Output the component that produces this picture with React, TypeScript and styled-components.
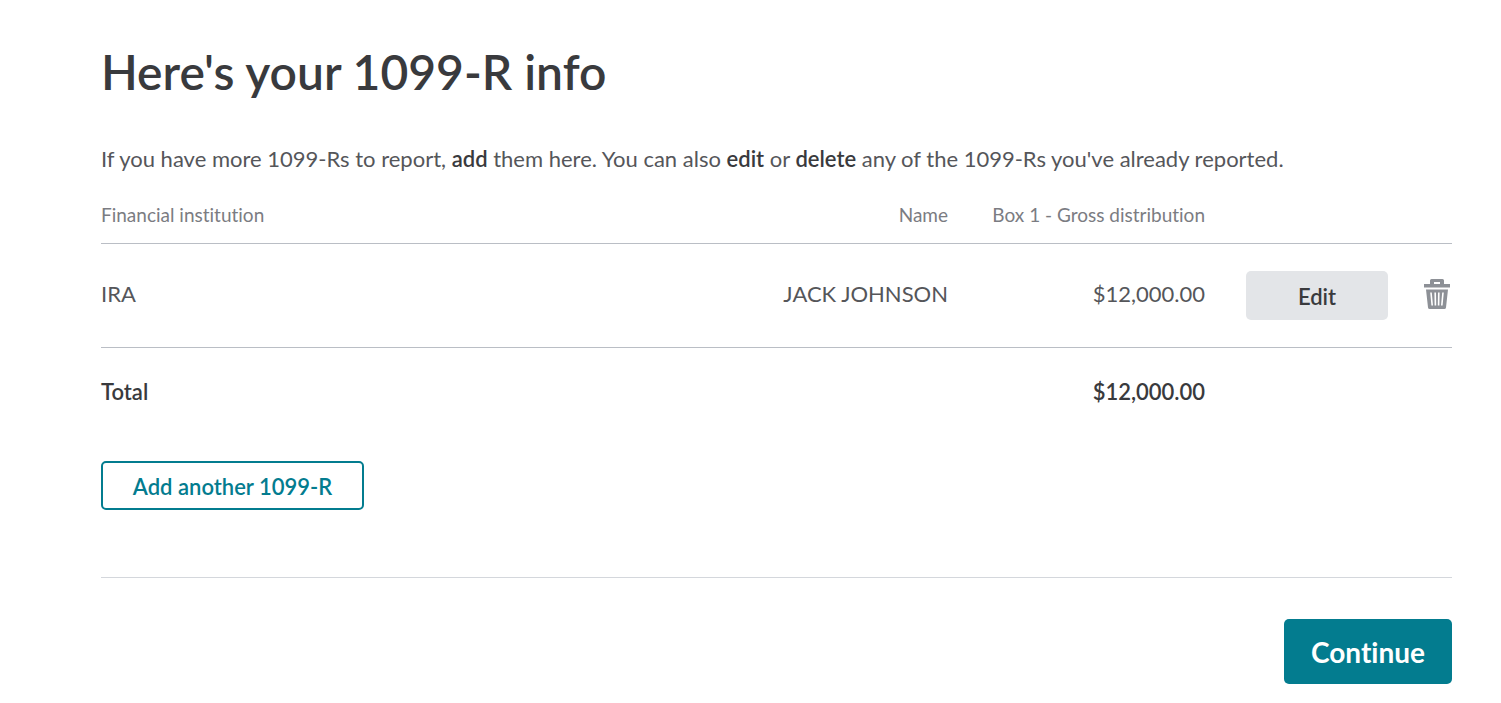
import React from "react";
import styled, { createGlobalStyle } from "styled-components";

const GlobalStyle = createGlobalStyle`
  *, *::before, *::after { box-sizing: border-box; }
  body {
    margin: 0;
    background: #fff;
    color: #393a3d;
    font-family: Lato, "Open Sans", sans-serif;
    font-size: 22px;
    font-weight: 400;
    font-variant-ligatures: none;
    line-height: 32px;
  }
`;

const Page = styled.main`
  padding: 42px 49px 19px 101px;
`;

const Title = styled.h1`
  margin: 0 0 41px;
  font-size: 48px;
  font-weight: 600;
  line-height: 60px;
`;

const Intro = styled.p`
  margin: 0 0 26px;
  color: #55565a;

  b {
    color: #393a3d;
    font-weight: 600;
  }
`;

const Table = styled.table`
  width: 100%;
  border-collapse: separate;
  border-spacing: 0;
`;

const HeadCell = styled.th<{ $end?: boolean }>`
  padding: 0 0 14px ${(p) => (p.$end ? "40px" : "0")};
  border-bottom: 1px solid #babec5;
  color: #7b7c82;
  font-size: 19px;
  font-weight: 400;
  line-height: 28px;
  text-align: ${(p) => (p.$end ? "right" : "left")};
  white-space: nowrap;
`;

const Cell = styled.td<{ $end?: boolean }>`
  height: 104px;
  padding: 0 0 4px ${(p) => (p.$end ? "40px" : "0")};
  border-bottom: 1px solid #babec5;
  color: #55565a;
  text-align: ${(p) => (p.$end ? "right" : "left")};
  white-space: nowrap;
`;

const ActionCell = styled(Cell)`
  padding: 0;
`;

const TotalCell = styled.td<{ $end?: boolean }>`
  padding: 28px 0;
  font-weight: 600;
  text-align: ${(p) => (p.$end ? "right" : "left")};
`;

const RowActions = styled.div`
  display: flex;
  align-items: center;
  justify-content: flex-end;
  gap: 35px;
`;

const Button = styled.button<{ $kind: "neutral" | "outline" | "primary" }>`
  width: ${(p) => ({ neutral: 142, outline: 263, primary: 168 })[p.$kind]}px;
  height: ${(p) => (p.$kind === "primary" ? 65 : 49)}px;
  padding: ${(p) => (p.$kind === "primary" ? 0 : "2px 0 0")};
  border: ${(p) => (p.$kind === "outline" ? "2px solid #037c8f" : "0")};
  border-radius: 5px;
  background: ${(p) =>
    ({ neutral: "#e3e5e8", outline: "#fff", primary: "#037c8f" })[p.$kind]};
  color: ${(p) =>
    ({ neutral: "#393a3d", outline: "#037c8f", primary: "#fff" })[p.$kind]};
  font-family: inherit;
  font-size: ${(p) => (p.$kind === "primary" ? 28 : 22)}px;
  font-weight: ${(p) => (p.$kind === "primary" ? 700 : 600)};
  font-variant-ligatures: none;
  cursor: pointer;
`;

const IconButton = styled.button`
  display: flex;
  padding: 0 0 4px;
  border: 0;
  background: none;
  color: #8d9096;
  cursor: pointer;
`;

const AddRow = styled.div`
  padding: 25px 0 67px;
`;

const Footer = styled.footer`
  display: flex;
  justify-content: flex-end;
  padding-top: 41px;
  border-top: 1px solid #d4d7dc;
`;

function TrashIcon() {
  return (
    <svg width="29" height="32" viewBox="0 0 29 32" fill="none" aria-hidden="true">
      <path
        fill="currentColor"
        fillRule="evenodd"
        d="M8.500 1h11a1.500 1.500 0 0 1 1.500 1.500V6h6v3.500H1V6h6V2.500A1.500 1.500 0 0 1 8.500 1ZM11 4v2h6V4h-6Z"
      />
      <path
        fill="currentColor"
        d="M3 11.500h22l-2 18a1.700 1.700 0 0 1-1.700 1.500H6.700A1.700 1.700 0 0 1 5 29.500Z"
      />
      <path
        stroke="#fff"
        strokeWidth="1.600"
        d="m8 14.500 1.200 13M12.200 14.500l.2 13M15.800 14.500l-.2 13M20 14.500l-1.200 13"
      />
    </svg>
  );
}

export default function App() {
  return (
    <>
      <GlobalStyle />
      <Page>
        <Title>Here's your 1099-R info</Title>
        <Intro>
          If you have more 1099-Rs to report, <b>add</b> them here. You can also{" "}
          <b>edit</b> or <b>delete</b> any of the 1099-Rs you've already reported.
        </Intro>
        <Table>
          <colgroup>
            <col />
            <col />
            <col width="257" />
            <col width="247" />
          </colgroup>
          <thead>
            <tr>
              <HeadCell scope="col">Financial institution</HeadCell>
              <HeadCell scope="col" $end>Name</HeadCell>
              <HeadCell scope="col" $end>Box 1 - Gross distribution</HeadCell>
              <HeadCell scope="col" aria-label="Actions" />
            </tr>
          </thead>
          <tbody>
            <tr>
              <Cell>IRA</Cell>
              <Cell $end>JACK JOHNSON</Cell>
              <Cell $end>$12,000.00</Cell>
              <ActionCell>
                <RowActions>
                  <Button type="button" $kind="neutral">Edit</Button>
                  <IconButton type="button" aria-label="Delete IRA">
                    <TrashIcon />
                  </IconButton>
                </RowActions>
              </ActionCell>
            </tr>
          </tbody>
          <tfoot>
            <tr>
              <TotalCell>Total</TotalCell>
              <TotalCell />
              <TotalCell $end>$12,000.00</TotalCell>
              <TotalCell />
            </tr>
          </tfoot>
        </Table>
        <AddRow>
          <Button type="button" $kind="outline">Add another 1099-R</Button>
        </AddRow>
        <Footer>
          <Button type="button" $kind="primary">Continue</Button>
        </Footer>
      </Page>
    </>
  );
}
